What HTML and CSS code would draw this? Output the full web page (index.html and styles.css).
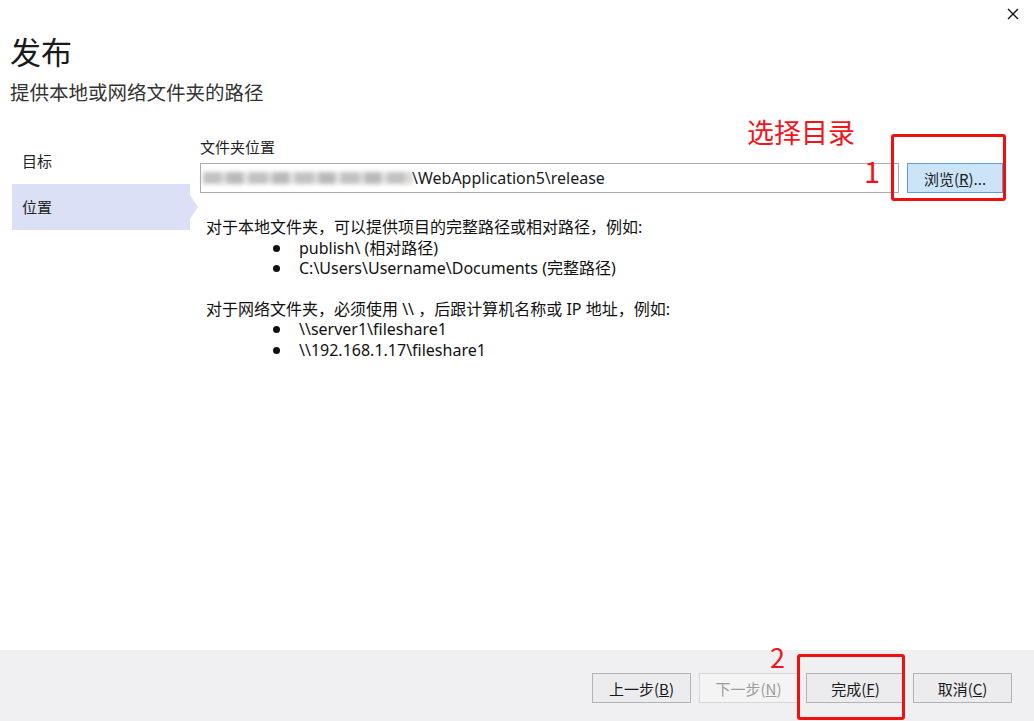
FILE: index.html
```html
<!DOCTYPE html>
<html lang="zh-CN">
<head>
<meta charset="utf-8">
<title>发布</title>
<link rel="stylesheet" href="styles.css">
</head>
<body>
<div class="dialog">
  <button class="close" aria-label="关闭">
    <svg width="12" height="12" viewBox="0 0 12 12"><path d="M1 1 L11 11 M11 1 L1 11" stroke="#111" stroke-width="1.4" fill="none"/></svg>
  </button>
  <header class="head">
    <h1 class="title">发布</h1>
    <p class="subtitle">提供本地或网络文件夹的路径</p>
  </header>
  <main class="main">
    <nav class="nav">
      <div class="nav-item">目标</div>
      <div class="nav-item selected">位置</div>
    </nav>
    <section class="content">
      <div class="label">文件夹位置</div>
      <div class="row">
        <div class="input">
          <span class="blur"></span>
          <span class="path">\WebApplication5\release</span>
        </div>
        <button class="browse">浏览(<u>R</u>)...</button>
      </div>
      <div class="desc">
        <p>对于本地文件夹，可以提供项目的完整路径或相对路径，例如:</p>
        <ul>
          <li>publish\ (相对路径)</li>
          <li>C:\Users\Username\Documents (完整路径)</li>
        </ul>
        <p class="gap">对于网络文件夹，必须使用 \\ ，后跟计算机名称或 IP 地址，例如:</p>
        <ul>
          <li>\\server1\fileshare1</li>
          <li>\\192.168.1.17\fileshare1</li>
        </ul>
      </div>
    </section>
  </main>
  <footer class="footer">
    <button class="btn">上一步(<u>B</u>)</button>
    <button class="btn" disabled>下一步(<u>N</u>)</button>
    <button class="btn">完成(<u>F</u>)</button>
    <button class="btn">取消(<u>C</u>)</button>
  </footer>

  <div class="note note-text">选择目录</div>
  <div class="note note-1">1</div>
  <div class="redbox redbox-1"></div>
  <div class="note note-2">2</div>
  <div class="redbox redbox-2"></div>
</div>
</body>
</html>
```

FILE: styles.css
```css
* { box-sizing: border-box; }
html, body { margin: 0; padding: 0; }
body {
  background: #fff;
  font-family: "Noto Sans", "Noto Sans CJK SC", sans-serif;
  color: #1b1b1b;
}
.dialog {
  position: relative;
  width: 1034px;
  height: 721px;
  display: flex;
  flex-direction: column;
  overflow: hidden;
}
.close {
  position: absolute;
  top: 7px;
  left: 1006px;
  width: 14px;
  height: 14px;
  padding: 0;
  border: 0;
  background: transparent;
  display: flex;
  align-items: center;
  justify-content: center;
}
.head { padding: 31px 0 0 10px; }
.title {
  margin: 0;
  font-family: "Noto Sans CJK SC", sans-serif;
  font-weight: 400;
  font-size: 31px;
  line-height: 40px;
  color: #1a1a1a;
}
.subtitle {
  margin: 8px 0 0;
  font-family: "Noto Sans CJK SC", sans-serif;
  font-size: 19.5px;
  line-height: 26px;
  color: #333;
}
.main {
  flex: 1;
  display: flex;
  padding-top: 33px;
}
.nav {
  width: 178px;
  margin-left: 12px;
  display: flex;
  flex-direction: column;
}
.nav-item {
  height: 46px;
  line-height: 46px;
  padding-left: 10px;
  font-family: "Noto Sans CJK SC", sans-serif;
  font-size: 15px;
  color: #222;
}
.nav-item.selected {
  position: relative;
  background: #dbe0f6;
}
.nav-item.selected::after {
  content: "";
  position: absolute;
  left: 100%;
  top: 11px;
  border-left: 8px solid #dbe0f6;
  border-top: 12px solid transparent;
  border-bottom: 12px solid transparent;
}
.content {
  margin-left: 10px;
  width: 803px;
}
.label {
  font-family: "Noto Sans CJK SC", sans-serif;
  font-size: 15px;
  line-height: 18px;
  color: #1e1e1e;
}
.row {
  display: flex;
  gap: 8px;
  margin-top: 7px;
}
.input {
  width: 699px;
  height: 30px;
  border: 1px solid #a9abb2;
  display: flex;
  align-items: center;
  background: #fff;
  position: relative;
}
.blur {
  width: 209px;
  height: 12px;
  margin-left: 2px;
  background: repeating-linear-gradient(90deg, #c2c2c2 0 18px, #dadada 18px 24px, #b9b9b9 24px 40px, #e2e2e2 40px 46px);
  filter: blur(2px);
}
.path {
  font-size: 16px;
  color: #1a1a1a;
}
.browse {
  width: 96px;
  height: 30px;
  border: 1px solid #5a9fe0;
  background: #cce4f7;
  font-family: "Noto Sans CJK SC", sans-serif;
  font-size: 15px;
  color: #1a1a1a;
  padding: 0;
}
.desc {
  margin-top: 24px;
  padding-left: 6px;
  font-family: "Noto Sans", "Noto Sans CJK SC", sans-serif;
  font-size: 16px;
  line-height: 20.5px;
  color: #111;
}
.desc p { margin: 0; }
.desc p.gap { margin-top: 20px; }
.desc ul {
  margin: 0;
  padding: 0 0 0 93px;
  list-style: none;
}
.desc li { position: relative; }
.desc li::before {
  content: "";
  position: absolute;
  left: -26px;
  top: 7px;
  width: 7px;
  height: 7px;
  border-radius: 50%;
  background: #111;
}
.footer {
  height: 71px;
  background: #f0f0f2;
  display: flex;
  justify-content: flex-end;
  align-items: flex-start;
  gap: 8px;
  padding: 23px 22px 0 0;
}
.btn {
  width: 99px;
  height: 30px;
  border: 1px solid #b3b3b3;
  background: #ececef;
  font-family: "Noto Sans CJK SC", sans-serif;
  font-size: 15px;
  color: #1a1a1a;
  padding: 0;
}
.btn:disabled {
  background: #f4f4f5;
  border-color: #d6d6d8;
  color: #9c9c9c;
}
.note {
  position: absolute;
  color: #f2151b;
  font-family: "Noto Sans CJK SC", sans-serif;
  line-height: 1;
}
.note-text { left: 747px; top: 118px; font-size: 27px; }
.note-1 { left: 864px; top: 156px; font-size: 29px; }
.note-2 { left: 770px; top: 643px; font-size: 27px; }
.redbox {
  position: absolute;
  border: 3px solid #f01010;
  border-radius: 3px;
}
.redbox-1 { left: 891px; top: 134px; width: 115px; height: 67px; }
.redbox-2 { left: 797px; top: 654px; width: 108px; height: 66px; }
```
